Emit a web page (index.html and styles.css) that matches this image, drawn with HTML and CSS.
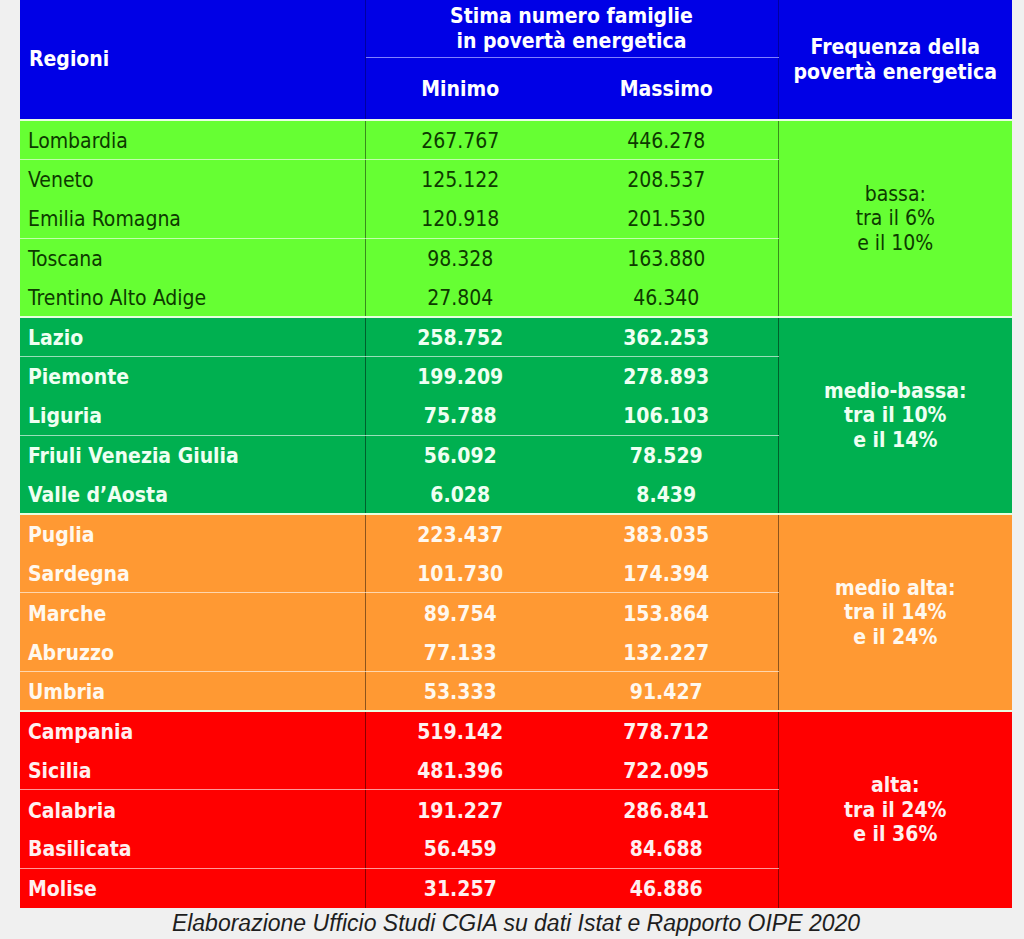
FILE: index.html
```html
<!DOCTYPE html>
<html lang="it">
<head>
<meta charset="utf-8">
<title>Povertà energetica per regione</title>
<link rel="stylesheet" href="styles.css">
</head>
<body>
<div class="wrap">
<table class="tab">
  <colgroup>
    <col class="c-reg"><col class="c-min"><col class="c-max"><col class="c-freq">
  </colgroup>
  <thead>
    <tr class="h1">
      <th rowspan="2" class="th-reg">Regioni</th>
      <th colspan="2" class="th-stima">Stima numero famiglie<br>in povertà energetica</th>
      <th rowspan="2" class="th-freq">Frequenza della<br>povertà energetica</th>
    </tr>
    <tr class="h2">
      <th class="th-sub">Minimo</th>
      <th class="th-sub th-max">Massimo</th>
    </tr>
  </thead>
  <tbody class="g g-low">
    <tr class="sep"><td class="reg">Lombardia</td><td class="num">267.767</td><td class="num">446.278</td><td rowspan="5" class="freq">bassa:<br>tra il 6%<br>e il 10%</td></tr>
    <tr><td class="reg">Veneto</td><td class="num">125.122</td><td class="num">208.537</td></tr>
    <tr class="sep"><td class="reg">Emilia Romagna</td><td class="num">120.918</td><td class="num">201.530</td></tr>
    <tr><td class="reg">Toscana</td><td class="num">98.328</td><td class="num">163.880</td></tr>
    <tr><td class="reg">Trentino Alto Adige</td><td class="num">27.804</td><td class="num">46.340</td></tr>
  </tbody>
  <tbody class="g g-mlow">
    <tr class="sep"><td class="reg">Lazio</td><td class="num">258.752</td><td class="num">362.253</td><td rowspan="5" class="freq">medio-bassa:<br>tra il 10%<br>e il 14%</td></tr>
    <tr><td class="reg">Piemonte</td><td class="num">199.209</td><td class="num">278.893</td></tr>
    <tr class="sep"><td class="reg">Liguria</td><td class="num">75.788</td><td class="num">106.103</td></tr>
    <tr><td class="reg">Friuli Venezia Giulia</td><td class="num">56.092</td><td class="num">78.529</td></tr>
    <tr><td class="reg">Valle d’Aosta</td><td class="num">6.028</td><td class="num">8.439</td></tr>
  </tbody>
  <tbody class="g g-mhigh">
    <tr><td class="reg">Puglia</td><td class="num">223.437</td><td class="num">383.035</td><td rowspan="5" class="freq">medio alta:<br>tra il 14%<br>e il 24%</td></tr>
    <tr class="sep"><td class="reg">Sardegna</td><td class="num">101.730</td><td class="num">174.394</td></tr>
    <tr><td class="reg">Marche</td><td class="num">89.754</td><td class="num">153.864</td></tr>
    <tr class="sep"><td class="reg">Abruzzo</td><td class="num">77.133</td><td class="num">132.227</td></tr>
    <tr><td class="reg">Umbria</td><td class="num">53.333</td><td class="num">91.427</td></tr>
  </tbody>
  <tbody class="g g-high">
    <tr><td class="reg">Campania</td><td class="num">519.142</td><td class="num">778.712</td><td rowspan="5" class="freq">alta:<br>tra il 24%<br>e il 36%</td></tr>
    <tr class="sep"><td class="reg">Sicilia</td><td class="num">481.396</td><td class="num">722.095</td></tr>
    <tr><td class="reg">Calabria</td><td class="num">191.227</td><td class="num">286.841</td></tr>
    <tr class="sep"><td class="reg">Basilicata</td><td class="num">56.459</td><td class="num">84.688</td></tr>
    <tr><td class="reg">Molise</td><td class="num">31.257</td><td class="num">46.886</td></tr>
  </tbody>
</table>
<p class="caption">Elaborazione Ufficio Studi CGIA su dati Istat e Rapporto OIPE 2020</p>
</div>
</body>
</html>
```
FILE: styles.css
```css
html, body {
  margin: 0;
  padding: 0;
  background: #f0f0f0;
}

.wrap {
  width: 992px;
  margin-left: 20px;
}

.tab {
  width: 992px;
  border-collapse: collapse;
  table-layout: fixed;
  font-family: "DejaVu Sans Condensed", "DejaVu Sans", sans-serif;
  font-stretch: condensed;
  font-size: 21px;
}

.c-reg { width: 345px; }
.c-min { width: 190px; }
.c-max { width: 223px; }
.c-freq { width: 234px; }

thead th {
  background: #0000e6;
  color: #ffffff;
  font-weight: bold;
  font-size: 21px;
  line-height: 25px;
  padding: 0;
  text-align: center;
}

.h1 { height: 57px; }
.h2 { height: 63px; }

.th-reg {
  text-align: left;
  padding-left: 9px;
  border-right: 1px solid #0000a0;
}

.th-stima {
  border-bottom: 1px solid #8080ff;
  padding-top: 1px;
}

.th-freq {
  border-left: 1px solid #0000a0;
  padding-top: 1px;
}

.th-sub {
  padding-top: 2px;
}

tbody tr { height: 39.4px; }

tbody td {
  padding: 0;
  line-height: 24px;
  border-right: 1px solid rgba(0, 0, 0, 0.45);
}

tbody td:last-child { border-right: none; }

td.reg {
  padding-left: 8px;
  padding-top: 2px;
}

td.num {
  text-align: center;
  padding-top: 2px;
  border-right: none;
}

td.num + td.num {
  border-right: 1px solid rgba(0, 0, 0, 0.45);
}

td.freq {
  text-align: center;
  vertical-align: middle;
  line-height: 24.5px;
}

tbody.g tr:first-child td {
  border-top: 2px solid #e8ffe0;
}

tbody.g tr.sep td {
  border-bottom: 1px solid rgba(255, 255, 255, 0.6);
}

tbody.g tr.sep td.freq {
  border-bottom: none;
}

.g-low td {
  background: #66ff33;
  color: #0d3a00;
}

.g-mlow td {
  background: #00b050;
  color: #effff2;
  font-weight: bold;
}

.g-mhigh td {
  background: #ff9933;
  color: #fff8ee;
  font-weight: bold;
}

.g-high td {
  background: #ff0000;
  color: #fff0f0;
  font-weight: bold;
}

.caption {
  margin: 1px 0 0;
  text-align: center;
  font-family: "Liberation Sans", Arial, sans-serif;
  font-style: italic;
  font-size: 23px;
  line-height: 28px;
  color: #1e1e1e;
}
```
